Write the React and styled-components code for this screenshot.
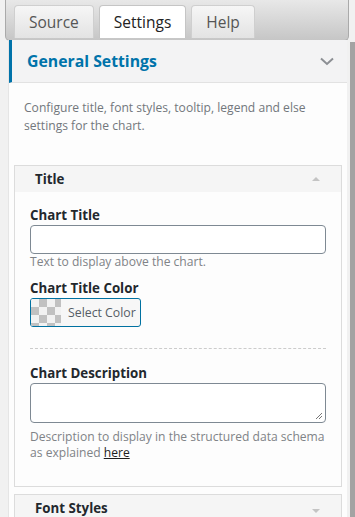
import styled, { createGlobalStyle } from 'styled-components'

const GlobalStyle = createGlobalStyle`
  html, body {
    margin: 0;
    padding: 0;
    background: #f1f1f1;
    font-family: "Open Sans", "Liberation Sans", sans-serif;
  }
  * { box-sizing: border-box; }
`

const Page = styled.div`
  width: 355px;
  height: 517px;
  display: flex;
  overflow: hidden;
`

const Main = styled.div`
  flex: 1;
  min-width: 0;
  padding: 0 1px 0 5px;
  display: flex;
  flex-direction: column;
`

const Scrollbar = styled.div`
  width: 5px;
  margin-top: 42px;
  background: #a3a3a3;
`

const TabBar = styled.div`
  flex-shrink: 0;
  height: 41px;
  display: flex;
  align-items: flex-end;
  gap: 5px;
  padding: 0 8px 2px 8px;
  border: 1px solid #aaaaaa;
  border-top: none;
  border-radius: 0 0 5px 5px;
  background: linear-gradient(#e8e8e8, #c6c6c6);
`

const Tab = styled.div`
  height: 33px;
  padding: 0 14px;
  display: flex;
  align-items: center;
  font-size: 15.5px;
  color: ${p => (p.$active ? '#222' : '#555')};
  border: 1px solid ${p => (p.$active ? '#c5c5c5' : '#cfcfcf')};
  border-bottom: none;
  border-radius: 4px 4px 0 0;
  background: ${p => (p.$active ? '#ffffff' : 'linear-gradient(#f6f6f6, #e3e3e3)')};
`

const Panel = styled.div`
  flex: 1;
  min-height: 0;
  margin: -1px 2px 0 3px;
  background: #fdfdfd;
  border-left: 1px solid #e5e5e5;
`

const PanelHeader = styled.div`
  height: 43px;
  display: flex;
  align-items: center;
  justify-content: space-between;
  padding: 0 13px 0 15px;
  background: #f3f3f4;
  border-left: 3px solid #0073aa;
  border-bottom: 1px solid #e2e2e2;
`

const PanelTitle = styled.div`
  font-size: 15.8px;
  font-weight: 700;
  color: #0073aa;
`

const Intro = styled.p`
  margin: 0;
  padding: 16px 15px 30px 15px;
  font-size: 12.1px;
  line-height: 18px;
  color: #72777c;
`

const Group = styled.div`
  margin: 0 5px 7px 5px;
  border: 1px solid #dcdcdc;
`

const GroupHeader = styled.div`
  height: 26px;
  display: flex;
  align-items: center;
  justify-content: space-between;
  padding: 0 21px 0 20px;
  background: #f5f5f5;
  font-size: 13.3px;
  font-weight: 700;
  color: #23282d;
`

const Caret = styled.span`
  width: 0;
  height: 0;
  border-left: 4px solid transparent;
  border-right: 4px solid transparent;
  ${p => (p.$up ? 'border-bottom: 4px solid #c4c4c4;' : 'border-top: 4px solid #c4c4c4;')}
  margin-top: ${p => (p.$up ? '0' : '5px')};
`

const GroupBody = styled.div`
  padding: 14px 15px 25px 15px;
`

const Label = styled.div`
  font-size: 13.3px;
  font-weight: 700;
  line-height: 18px;
  color: #23282d;
  margin-top: ${p => p.$gap || 0}px;
`

const Input = styled.div`
  margin-top: 1px;
  height: 29px;
  border: 1px solid #7e8993;
  border-radius: 4px;
  background: #fff;
`

const TextArea = styled.div`
  position: relative;
  margin-top: 1px;
  height: 40px;
  border: 1px solid #7e8993;
  border-radius: 4px;
  background: #fff;
`

const Grip = styled.svg`
  position: absolute;
  right: 2px;
  bottom: 2px;
`

const Hint = styled.div`
  font-size: 12.1px;
  line-height: 16px;
  color: #808387;
  margin-top: ${p => p.$gap || 0}px;
`

const Link = styled.span`
  display: inline-block;
  color: #1e1e1e;
  text-decoration: underline;
`

const ColorButton = styled.div`
  margin-top: 1px;
  width: 111px;
  height: 29px;
  display: flex;
  align-items: center;
  border: 1px solid #0071a1;
  border-radius: 3px;
  background: #f7f7f7;
  overflow: hidden;
`

const Swatch = styled.div`
  width: 30px;
  height: 100%;
  background-color: #f2f2f2;
  background-image: conic-gradient(#c1c1c1 25%, transparent 0 50%, #c1c1c1 0 75%, transparent 0);
  background-size: 16px 16px;
`

const ColorText = styled.span`
  padding-left: 7px;
  font-size: 12.3px;
  color: #555d66;
`

const Divider = styled.div`
  margin-top: 21px;
  border-top: 1px dashed #cccccc;
`

function App() {
  return (
    <Page>
      <GlobalStyle />
      <Main>
        <TabBar>
          <Tab>Source</Tab>
          <Tab $active>Settings</Tab>
          <Tab>Help</Tab>
        </TabBar>
        <Panel>
          <PanelHeader>
            <PanelTitle>General Settings</PanelTitle>
            <svg width="14" height="9" viewBox="0 0 14 9">
              <path d="M1 1.5 L7 7 L13 1.5" fill="none" stroke="#8c8f94" strokeWidth="2" />
            </svg>
          </PanelHeader>
          <Intro>Configure title, font styles, tooltip, legend and else settings for the chart.</Intro>
          <Group>
            <GroupHeader>
              Title
              <Caret $up />
            </GroupHeader>
            <GroupBody>
              <Label>Chart Title</Label>
              <Input />
              <Hint>Text to display above the chart.</Hint>
              <Label $gap={9}>Chart Title Color</Label>
              <ColorButton>
                <Swatch />
                <ColorText>Select Color</ColorText>
              </ColorButton>
              <Divider />
              <Label $gap={15}>Chart Description</Label>
              <TextArea>
                <Grip width="9" height="9" viewBox="0 0 9 9">
                  <path d="M8 2 L2 8 M8 5 L5 8" stroke="#777" strokeWidth="1" />
                </Grip>
              </TextArea>
              <Hint $gap={6}>
                Description to display in the structured data schema as explained <Link>here</Link>
              </Hint>
            </GroupBody>
          </Group>
          <Group>
            <GroupHeader>
              Font Styles
              <Caret />
            </GroupHeader>
          </Group>
        </Panel>
      </Main>
      <Scrollbar />
    </Page>
  )
}

export default App
